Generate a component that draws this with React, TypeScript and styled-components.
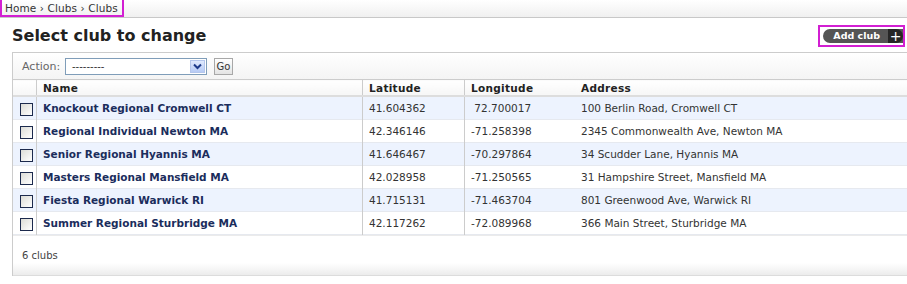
import React from 'react'
import styled, { createGlobalStyle } from 'styled-components'

const GlobalStyle = createGlobalStyle`
  html, body {
    margin: 0;
    padding: 0;
    background: #fff;
  }
  body {
    font-family: 'DejaVu Sans', Verdana, sans-serif;
    font-size: 11px;
    color: #333;
  }
`

const Page = styled.div`
  width: 907px;
  height: 284px;
  overflow: hidden;
`

const Breadcrumbs = styled.div`
  height: 17px;
  border-bottom: 1px solid #c8c8c8;
  background: linear-gradient(#fff, #f0f0f0);
  display: flex;
  align-items: stretch;
`

const CrumbBox = styled.div`
  border: 2px solid #d21fd2;
  border-top: 0;
  padding: 0 4px 0 3px;
  display: flex;
  align-items: center;
  font-size: 10.5px;
  color: #333;
  letter-spacing: 0.1px;
`

const Content = styled.div`
  padding: 0 0 0 12px;
`

const TitleRow = styled.div`
  display: flex;
  justify-content: space-between;
  align-items: center;
  height: 32px;
`

const Title = styled.h1`
  margin: 3px 0 0 0;
  font-size: 16px;
  font-weight: bold;
  color: #222;
`

const AddBox = styled.div`
  border: 2px solid #d21fd2;
  padding: 2px 0 2px 3px;
  margin-right: 2px;
  margin-top: 3px;
`

const AddButton = styled.a`
  display: flex;
  align-items: center;
  height: 14px;
  border-radius: 7px 0 0 7px;
  background: #555;
  color: #fff;
  font-weight: bold;
  font-size: 9.5px;
  overflow: hidden;
  text-decoration: none;
`

const AddLabel = styled.span`
  padding: 0 8px 0 10px;
`

const AddPlus = styled.span`
  width: 15px;
  height: 14px;
  border-radius: 0 7px 7px 0;
  background: #262626;
  display: flex;
  align-items: center;
  justify-content: center;
  font-size: 14px;
  font-weight: normal;
`

const Module = styled.div`
  border-left: 1px solid #ccc;
  border-top: 1px solid #ccc;
  margin-top: 2px;
`

const ActionBar = styled.div`
  height: 26px;
  display: flex;
  align-items: center;
  padding-left: 9px;
  background: linear-gradient(#fff, #f4f4f4);
  color: #666;
`

const ActionLabel = styled.span`
  width: 43px;
`

const Select = styled.div`
  width: 134px;
  height: 15px;
  border: 1px solid #7f9db9;
  background: #fff;
  display: flex;
  align-items: center;
  justify-content: space-between;
  padding-left: 6px;
  color: #333;
  font-size: 10px;
`

const Arrow = styled.span`
  width: 15px;
  height: 13px;
  margin-right: 1px;
  background: linear-gradient(#dfe9fd, #b7cbf5);
  border: 1px solid #b4c6ec;
  box-sizing: border-box;
  display: flex;
  align-items: center;
  justify-content: center;
`

const GoButton = styled.span`
  margin-left: 7px;
  width: 17px;
  height: 15px;
  border: 1px solid #a8a8a8;
  background: linear-gradient(#fff, #e4e4e4);
  display: flex;
  align-items: center;
  justify-content: center;
  font-size: 10px;
  color: #333;
`

const Table = styled.table`
  width: 100%;
  border-collapse: collapse;
  border-top: 1px solid #ccc;
`

const HeadCell = styled.th<{ $w?: number; $line?: boolean }>`
  width: ${(p) => (p.$w ? `${p.$w}px` : 'auto')};
  height: 15px;
  padding: 0 0 0 6px;
  text-align: left;
  font-weight: bold;
  font-size: 10.5px;
  color: #222;
  letter-spacing: 0.3px;
  background: linear-gradient(#fff, #f6f6f6);
  border-bottom: 2px solid #ddd;
  border-right: ${(p) => (p.$line ? '1px solid #ccc' : '0')};
`

const Row = styled.tr<{ $alt: boolean }>`
  background: ${(p) => (p.$alt ? '#edf3fe' : '#fff')};
  border-bottom: 1px solid #e6e9ef;
`

const Cell = styled.td<{ $line?: boolean }>`
  height: 22px;
  padding: 0 0 0 6px;
  font-size: 10.5px;
  color: #333;
  border-right: ${(p) => (p.$line ? '1px solid #ccc' : '0')};
  white-space: pre;
`

const CheckCell = styled(Cell)`
  padding: 0 0 0 7px;
`

const Check = styled.span`
  display: block;
  width: 11px;
  height: 11px;
  margin-top: 3px;
  border: 1px solid #1c2a4d;
  background: linear-gradient(135deg, #dcdcd6, #fff);
`

const NameLink = styled.a`
  color: #1b2d5c;
  font-weight: bold;
  font-size: 10.5px;
  letter-spacing: 0;
  text-decoration: none;
`

const Footer = styled.div`
  height: 28px;
  box-sizing: border-box;
  padding: 14px 0 0 9px;
  color: #444;
  font-size: 10px;
  border-top: 1px solid #ebebeb;
`

const BottomBar = styled.div`
  height: 12px;
  background: linear-gradient(#fff, #ececec);
  border-bottom: 1px solid #dcdcdc;
`

const clubs = [
  ['Knockout Regional Cromwell CT', '41.604362', ' 72.700017', '100 Berlin Road, Cromwell CT'],
  ['Regional Individual Newton MA', '42.346146', '-71.258398', '2345 Commonwealth Ave, Newton MA'],
  ['Senior Regional Hyannis MA', '41.646467', '-70.297864', '34 Scudder Lane, Hyannis MA'],
  ['Masters Regional Mansfield MA', '42.028958', '-71.250565', '31 Hampshire Street, Mansfield MA'],
  ['Fiesta Regional Warwick RI', '41.715131', '-71.463704', '801 Greenwood Ave, Warwick RI'],
  ['Summer Regional Sturbridge MA', '42.117262', '-72.089968', '366 Main Street, Sturbridge MA'],
]

export default function App() {
  return (
    <Page>
      <GlobalStyle />
      <Breadcrumbs>
        <CrumbBox>Home › Clubs › Clubs</CrumbBox>
      </Breadcrumbs>
      <Content>
        <TitleRow>
          <Title>Select club to change</Title>
          <AddBox>
            <AddButton>
              <AddLabel>Add club</AddLabel>
              <AddPlus>+</AddPlus>
            </AddButton>
          </AddBox>
        </TitleRow>
        <Module>
          <ActionBar>
            <ActionLabel>Action:</ActionLabel>
            <Select>
              ---------
              <Arrow>
                <svg width="9" height="7" viewBox="0 0 9 7">
                  <path d="M1 1.5 L4.5 5 L8 1.5" stroke="#1d3a8a" strokeWidth="2" fill="none" />
                </svg>
              </Arrow>
            </Select>
            <GoButton>Go</GoButton>
          </ActionBar>
          <Table>
            <thead>
              <tr>
                <HeadCell $w={17} $line />
                <HeadCell $w={319} $line>Name</HeadCell>
                <HeadCell $w={95} $line>Latitude</HeadCell>
                <HeadCell $w={104}>Longitude</HeadCell>
                <HeadCell>Address</HeadCell>
              </tr>
            </thead>
            <tbody>
              {clubs.map((c, i) => (
                <Row key={c[0]} $alt={i % 2 === 0}>
                  <CheckCell $line>
                    <Check />
                  </CheckCell>
                  <Cell $line>
                    <NameLink>{c[0]}</NameLink>
                  </Cell>
                  <Cell $line>{c[1]}</Cell>
                  <Cell>{c[2]}</Cell>
                  <Cell>{c[3]}</Cell>
                </Row>
              ))}
            </tbody>
          </Table>
          <Footer>6 clubs</Footer>
          <BottomBar />
        </Module>
      </Content>
    </Page>
  )
}
